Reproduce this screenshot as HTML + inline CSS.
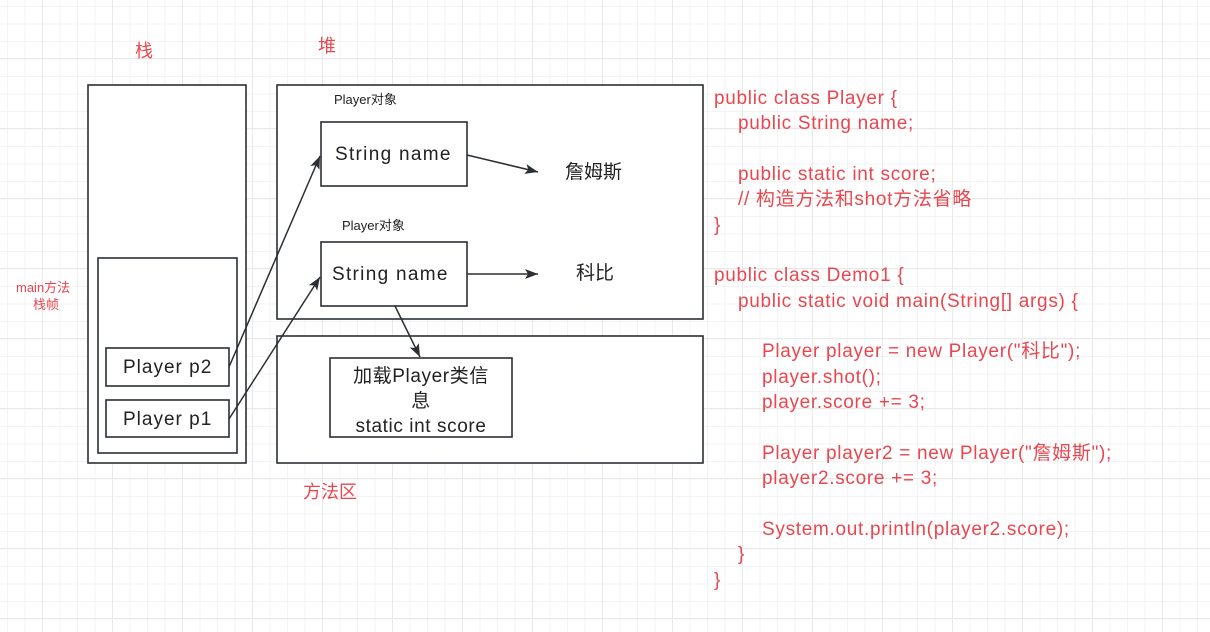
<!DOCTYPE html>
<html><head><meta charset="utf-8"><style>
html,body{margin:0;padding:0}
body{width:1210px;height:632px;overflow:hidden;position:relative;background-color:#fff;
background-image:
linear-gradient(to right,#e9e9e9 1px,transparent 1px),
linear-gradient(to bottom,#e9e9e9 1px,transparent 1px),
linear-gradient(to right,#f3f3f3 1px,transparent 1px),
linear-gradient(to bottom,#f3f3f3 1px,transparent 1px);
background-size:70px 70px,70px 70px,17.5px 17.5px,17.5px 17.5px;
background-position:42px 0,0 58px,7px 0,0 6px;
font-family:"Liberation Sans","Noto Sans CJK SC",sans-serif;}
.t{position:absolute;white-space:nowrap;line-height:1}
.red{color:#e8474f}
.w{letter-spacing:1px}
.code{position:absolute;left:714px;top:86px;color:#e8474f;font-size:19px;line-height:25.35px;letter-spacing:0.7px}
.code div{height:25.35px;white-space:pre}
.i1{padding-left:24px}.i2{padding-left:48px}
</style></head><body>
<svg width="1210" height="632" style="position:absolute;left:0;top:0">
<defs><marker id="a" markerWidth="14" markerHeight="14" refX="13" refY="6" orient="auto" markerUnits="userSpaceOnUse"><path d="M0,1 L13,6 L0,11 L3,6 z" fill="#2b2f33"/></marker></defs>
<g fill="#fff" stroke="#2b2f33" stroke-width="1.6">
<rect x="88" y="85" width="158" height="378"/>
<rect x="98" y="258" width="139" height="195"/>
<rect x="106" y="348" width="123" height="38"/>
<rect x="106" y="400" width="123" height="37"/>
<rect x="277" y="85" width="426" height="234"/>
<rect x="277" y="336" width="426" height="127"/>
<rect x="321" y="122" width="146" height="64"/>
<rect x="321" y="242" width="146" height="64"/>
<rect x="330" y="358" width="182" height="79"/>
</g>
<g stroke="#2b2f33" stroke-width="1.5" fill="none" marker-end="url(#a)">
<line x1="229" y1="367" x2="320" y2="156"/>
<line x1="229" y1="419" x2="320" y2="277"/>
<line x1="467" y1="155" x2="538" y2="172"/>
<line x1="467" y1="274" x2="538" y2="274"/>
<line x1="395" y1="306" x2="420" y2="357"/>
</g>
</svg>
<div class="t red" style="left:135px;top:42px;font-size:18px">栈</div>
<div class="t red" style="left:318px;top:37px;font-size:18px">堆</div>
<div class="t red" style="left:303px;top:483px;font-size:18px">方法区</div>
<div class="t red" style="left:16px;top:281px;font-size:13px">main方法</div>
<div class="t red" style="left:33px;top:298px;font-size:13px">栈帧</div>
<div class="t" style="left:334px;top:93px;font-size:13px;color:#222">Player对象</div>
<div class="t" style="left:342px;top:219px;font-size:13px;color:#222">Player对象</div>
<div class="t" style="left:335px;top:145px;font-size:19px;color:#222;letter-spacing:1.3px">String name</div>
<div class="t" style="left:332px;top:265px;font-size:19px;color:#222;letter-spacing:1.3px">String name</div>
<div class="t" style="left:565px;top:163px;font-size:19px;color:#222">詹姆斯</div>
<div class="t" style="left:576px;top:264px;font-size:19px;color:#222">科比</div>
<div class="t w" style="left:123px;top:358px;font-size:19px;color:#222">Player p2</div>
<div class="t w" style="left:123px;top:410px;font-size:19px;color:#222">Player p1</div>
<div class="t" style="left:330px;top:364px;width:182px;text-align:center;font-size:19px;line-height:25px;color:#222;white-space:normal;letter-spacing:0.6px">加载Player类信<br>息<br>static int score</div>
<div class="code"><div>public class Player {</div><div class="i1">public String name;</div><div></div><div class="i1">public static int score;</div><div class="i1">// 构造方法和shot方法省略</div><div>}</div><div></div><div>public class Demo1 {</div><div class="i1">public static void main(String[] args) {</div><div></div><div class="i2">Player player = new Player("科比");</div><div class="i2">player.shot();</div><div class="i2">player.score += 3;</div><div></div><div class="i2">Player player2 = new Player("詹姆斯");</div><div class="i2">player2.score += 3;</div><div></div><div class="i2">System.out.println(player2.score);</div><div class="i1">}</div><div>}</div></div>
</body></html>
